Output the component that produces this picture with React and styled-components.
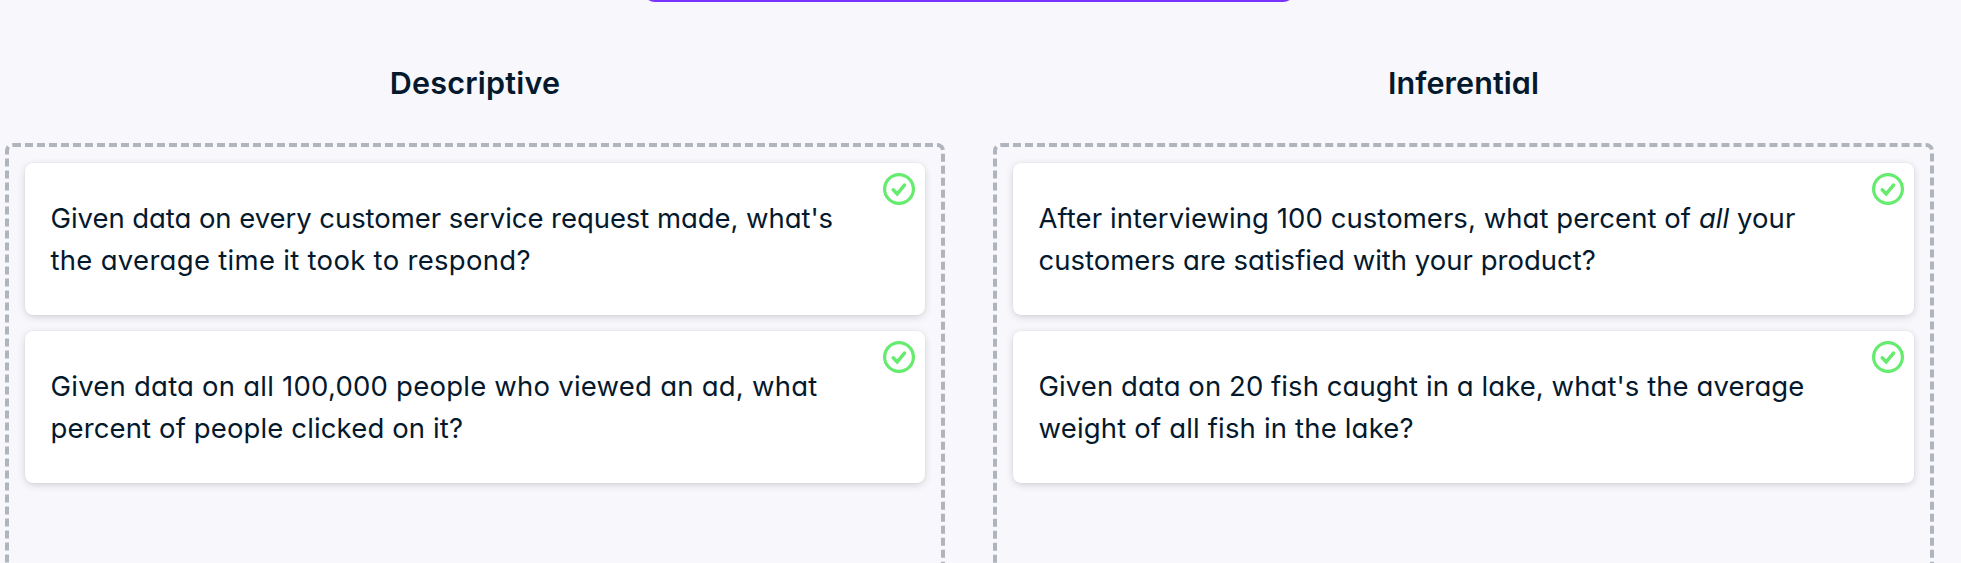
import React from "react";
import styled, { createGlobalStyle } from "styled-components";

const GlobalStyle = createGlobalStyle`
  *, *::before, *::after { box-sizing: border-box; }
  html, body { margin: 0; height: 563px; overflow: hidden; background: #f7f7fc; }
  body {
    color: #05192d;
    font-family: Inter, "Liberation Sans", sans-serif;
    font-feature-settings: "cv11" 1;
  }
`;

const Page = styled.main`
  height: 563px;
  overflow: hidden;
  display: flex;
  flex-direction: column;
`;

const OptionEdge = styled.div`
  flex: none;
  width: 652px;
  height: 24px;
  margin: -22px 0 0 643px;
  border: 2px solid #7933ff;
  border-radius: 12px;
`;

const Columns = styled.div`
  display: grid;
  grid-template-columns: 940px 941px;
  column-gap: 48px;
  padding: 54px 0 0 5px;
`;

const Column = styled.section`
  display: flex;
  flex-direction: column;
`;

const Heading = styled.h2`
  margin: 0 0 33px;
  height: 54px;
  line-height: 54px;
  font-size: 30.5px;
  font-weight: 600;
  text-align: center;
  letter-spacing: ${(p) => p.$spacing}px;
`;

const DropZone = styled.div`
  height: 640px;
  padding: 16px;
  display: flex;
  flex-direction: column;
  gap: 16px;
  border: 4px dashed #afb4bd;
  border-radius: 8px;
`;

const Card = styled.article`
  position: relative;
  height: 152px;
  padding: 34px 25.5px;
  background: #fff;
  border-radius: 8px;
  box-shadow: 0 2px 8px -1px rgba(5, 5, 15, 0.2), 0 0 2px rgba(5, 5, 15, 0.06);
`;

const Line = styled.span`
  display: block;
  height: 42px;
  line-height: 42px;
  font-size: 27.5px;
  white-space: nowrap;
  letter-spacing: ${(p) => p.$spacing}px;
`;

const CheckIcon = styled.svg`
  position: absolute;
  top: 10px;
  right: 10px;
  width: 32px;
  height: 32px;
  fill: none;
  stroke: #65eb6e;
`;

const columns = [
  {
    title: "Descriptive",
    spacing: 0.22,
    cards: [
      [["Given data on every customer service request made, what's", -0.06], ["the average time it took to respond?", 0.3]],
      [["Given data on all 100,000 people who viewed an ad, what", 0.23], ["percent of people clicked on it?", 0.13]],
    ],
  },
  {
    title: "Inferential",
    spacing: 0.08,
    cards: [
      [[<>After interviewing 100 customers, what percent of <em>all</em> your</>, 0.06], ["customers are satisfied with your product?", 0.01]],
      [["Given data on 20 fish caught in a lake, what's the average", 0.07], ["weight of all fish in the lake?", 0.17]],
    ],
  },
];

function CorrectMark() {
  return (
    <CheckIcon viewBox="0 0 32 32">
      <circle cx="16" cy="16" r="14.4" strokeWidth="3.2" />
      <path d="M10.2 16.8l4 4.1 7.3-8.7" strokeWidth="3.5" strokeLinecap="round" />
    </CheckIcon>
  );
}

export default function App() {
  return (
    <Page>
      <GlobalStyle />
      <OptionEdge />
      <Columns>
        {columns.map((column) => (
          <Column key={column.title}>
            <Heading $spacing={column.spacing}>{column.title}</Heading>
            <DropZone>
              {column.cards.map((lines, i) => (
                <Card key={i}>
                  {lines.map(([text, spacing], j) => (
                    <Line key={j} $spacing={spacing}>{text}</Line>
                  ))}
                  <CorrectMark />
                </Card>
              ))}
            </DropZone>
          </Column>
        ))}
      </Columns>
    </Page>
  );
}
